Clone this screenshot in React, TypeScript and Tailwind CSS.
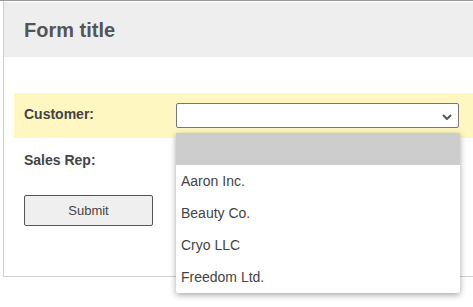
import React from "react";

const customers = ["", "Aaron Inc.", "Beauty Co.", "Cryo LLC", "Freedom Ltd."];

function Chevron() {
  return (
    <svg width="10" height="6" viewBox="0 0 10 6" className="absolute right-[6px] top-[10px]">
      <path d="M1 1 L5 5 L9 1" fill="none" stroke="#555" strokeWidth="2" />
    </svg>
  );
}

function SelectBox({ open }: { open?: boolean }) {
  return (
    <div className="relative mt-[10px]">
      <div className="relative h-[25px] w-[283px] rounded-[2px] border border-[#767676] bg-white">
        <Chevron />
      </div>
      {open && (
        <ul className="absolute left-0 top-[30px] z-10 w-[284px] rounded-b-[2px] bg-white shadow-[0_2px_6px_rgba(0,0,0,0.35)]">
          {customers.map((c, i) => (
            <li
              key={i}
              className={`flex h-[32px] items-center px-[5px] text-[14px] text-[#444] ${
                i === 0 ? "bg-[#cdcdcd]" : ""
              }`}
            >
              {c}
            </li>
          ))}
        </ul>
      )}
    </div>
  );
}

export default function App() {
  return (
    <div className="min-h-[307px] bg-white font-['Liberation_Sans',Arial,sans-serif] border-t border-[#9a9a9a]">
      <div className="ml-[3px] border-b border-l border-[#cfcfcf] pt-[1px]">
        <div className="flex h-[55px] items-center bg-[#eeeeee] px-[20px]">
          <h1 className="text-[20px] font-bold text-[#555]">Form title</h1>
        </div>

        <form className="ml-[10px] pt-[36px] pb-[50px]">
          <div className="flex h-[45px] bg-[#fff7c2]">
            <label className="w-[162px] pl-[10px] pt-[11px] text-[14px] font-bold text-[#444]">Customer:</label>
            <SelectBox open />
          </div>
          <div className="flex h-[45px]">
            <label className="w-[162px] pl-[10px] pt-[12px] text-[14px] font-bold text-[#444]">Sales Rep:</label>
            <SelectBox />
          </div>
          <div className="pl-[10px] pt-[12px]">
            <button
              type="button"
              className="h-[31px] w-[129px] rounded-[2px] border border-[#555] bg-[#efefef] text-[13px] text-[#444]"
            >
              Submit
            </button>
          </div>
        </form>
      </div>
    </div>
  );
}
